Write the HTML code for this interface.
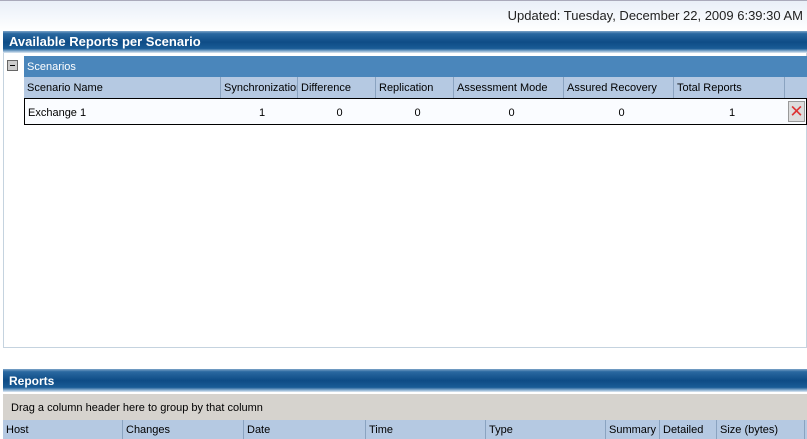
<!DOCTYPE html>
<html><head><style>
body{margin:0;width:807px;height:439px;overflow:hidden;background:#fff;font-family:"Liberation Sans",sans-serif;font-size:11px;color:#000;position:relative}
.a{position:absolute}
.bar{background:linear-gradient(#7da4c8 0,#2a68a0 12%,#0e4c86 50%,#1a5c96 80%,#8fb3d3 92%,#dfe9f2 100%);color:#fff;font-weight:bold;font-size:13px}
.hd{background:#b5c9e2;border-bottom:1px solid #8aa3c0}
.hd div,.rw div{position:absolute;top:0;height:100%;box-sizing:border-box;line-height:23px;padding-left:3px;white-space:nowrap;overflow:hidden}
.hd div{border-right:1px solid #8aa3c0}
</style></head><body>
<div class="a" style="left:0;top:0;width:807px;height:30px;background:linear-gradient(#e9eff8,#fff);border-top:1px solid #aab">
<div class="a" style="right:4px;top:7px;font-size:13px;color:#222">Updated: Tuesday, December 22, 2009 6:39:30 AM</div></div>
<div class="a bar" style="left:3px;top:31px;width:804px;height:22px;line-height:22px"><span style="padding-left:6px">Available Reports per Scenario</span></div>
<div class="a" style="left:3px;top:53px;width:802px;height:294px;border:1px solid #c5d3df;border-top:none"></div>
<div class="a" style="left:7px;top:60px;width:11px;height:11px;background:#ccc;border:1px solid #666;box-sizing:border-box"><div class="a" style="left:2px;top:4px;width:5px;height:1px;background:#000"></div></div>
<div class="a" style="left:24px;top:56px;width:783px;height:21px;background:#4a86bb;color:#fff;line-height:23px;padding-left:3px;box-sizing:border-box">Scenarios</div>
<div class="a hd" style="left:24px;top:77px;width:783px;height:21px">
<div style="left:0;width:197px">Scenario Name</div><div style="left:197px;width:77px">Synchronization</div><div style="left:274px;width:78px">Difference</div><div style="left:352px;width:78px">Replication</div><div style="left:430px;width:110px">Assessment Mode</div><div style="left:540px;width:110px">Assured Recovery</div><div style="left:650px;width:111px">Total Reports</div></div>
<div class="a rw" style="left:24px;top:98px;width:783px;height:27px;border:1px solid #000;box-sizing:border-box;background:#fafcff">
<div style="left:0;width:197px;line-height:28px">Exchange 1</div>
<div style="left:197px;width:77px;text-align:center;line-height:28px">1</div>
<div style="left:274px;width:78px;text-align:center;line-height:28px">0</div>
<div style="left:352px;width:78px;text-align:center;line-height:28px">0</div>
<div style="left:430px;width:110px;text-align:center;line-height:28px">0</div>
<div style="left:540px;width:110px;text-align:center;line-height:28px">0</div>
<div style="left:650px;width:111px;text-align:center;line-height:28px">1</div>
<div style="left:763px;top:2px;width:17px;height:21px;background:#ddd;border:1px solid #999;padding:0;color:#d33;font-size:17px;line-height:20px;text-align:center">✕</div>
</div>
<div class="a bar" style="left:3px;top:369px;width:804px;height:23px;line-height:24px"><span style="padding-left:6px;font-size:12px">Reports</span></div>
<div class="a" style="left:3px;top:394px;width:804px;height:26px;background:#d6d3ce;line-height:29px"><span style="padding-left:8px">Drag a column header here to group by that column</span></div>
<div class="a hd" style="left:3px;top:420px;width:804px;height:19px;border-bottom:none">
<div style="left:0;width:120px;line-height:21px">Host</div><div style="left:120px;width:121px;line-height:21px">Changes</div><div style="left:241px;width:122px;line-height:21px">Date</div><div style="left:363px;width:120px;line-height:21px">Time</div><div style="left:483px;width:120px;line-height:21px">Type</div><div style="left:603px;width:54px;line-height:21px">Summary</div><div style="left:657px;width:57px;line-height:21px">Detailed</div><div style="left:714px;width:88px;line-height:21px">Size (bytes)</div></div>
</body></html>
